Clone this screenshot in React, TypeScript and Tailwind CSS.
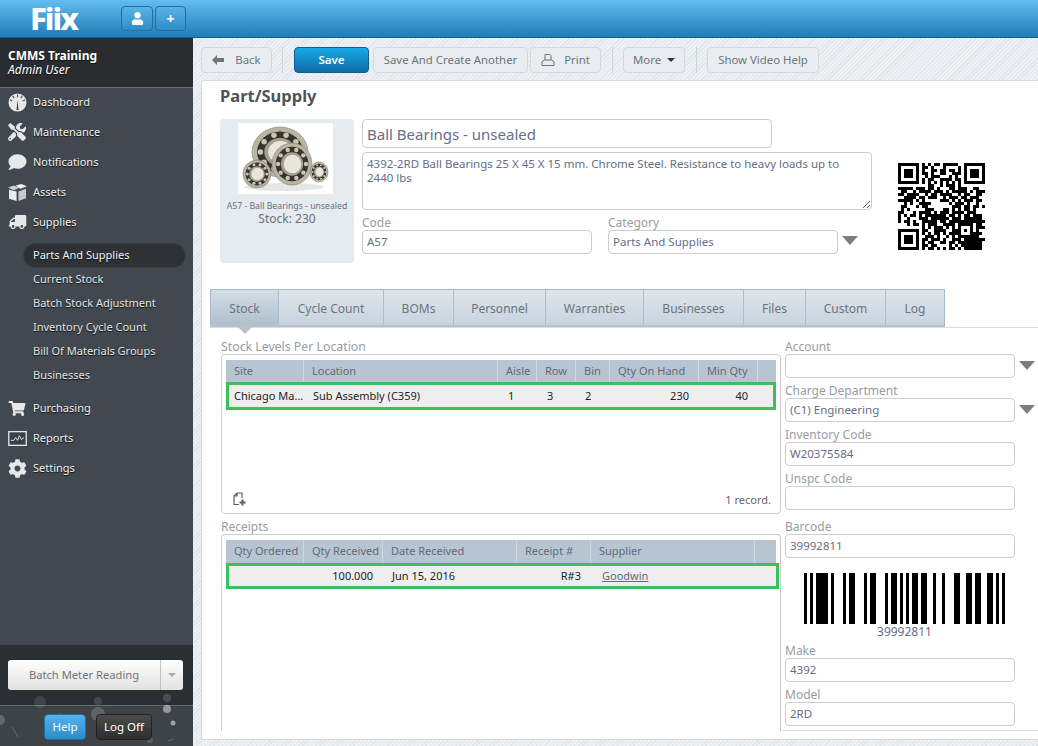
import React from "react";
import { FaTools, FaComment, FaTruck, FaShoppingCart, FaCog, FaUser } from "react-icons/fa";

const font = "font-['DejaVu_Sans_Condensed','DejaVu_Sans',sans-serif]";

const QR_ROWS = [
  "#######.#.#.##.#####..#######",
  "#.....#.##.#...#....#.#.....#",
  "#.###.#.#..##.##.##.#.#.###.#",
  "#.###.#.##.#..##..###.#.###.#",
  "#.###.#..#.###...#.#..#.###.#",
  "#.....#.#.##..####.##.#.....#",
  "#######.#.#.#.#.#.#.#.#######",
  "..........##..#.###.#........",
  "#####.###.##.#...##.###..##..",
  ".##..#.####.###.#.#####.#.###",
  "##.####..#.##.####..#.##..##.",
  "..####.##.###..#.###.##.###..",
  "#####.#.#.....###.#.#.###.##.",
  "..#.#..####......#.###.#..#..",
  ".##...#.##........###.##.##.#",
  ".#.#.....###...##.#.#.##.#...",
  "##...#.####.#.###.####.###...",
  "#.#.##.#.#######.##.#.##.###.",
  "#..#...###.######.###.######.",
  "#.##.#..#####.##.#############",
  "...#.##.#.###..####.#####.##.",
  "........#.#.###.#.#.#...#.###",
  "#######.##..####..###.#.#.#..",
  "#.....#.#.#.##.#.####...####.",
  "#.###.#..###.#..#.#.#######..",
  "#.###.#.##.###.#..###.#######",
  "#.###.#.#.##..##.##.########.",
  "#.....#.##.##....#.#.#######.",
  "#######.#.##.#.#.##.#.######.",
];

const BARS: [number, number][] = [
  [0, 3], [6, 3], [12, 12], [27, 3], [39, 3], [45, 6], [60, 3], [66, 6], [81, 3], [87, 6], [96, 3],
  [102, 3], [108, 6], [117, 6], [129, 3], [138, 3], [150, 6], [162, 6], [171, 6], [183, 6], [192, 3], [198, 3],
];

const GaugeIcon = () => (
  <svg viewBox="0 0 20 20" className="h-[19px] w-[19px]">
    <circle cx="10" cy="10" r="9.5" fill="#e8e8e8" />
    <path d="M10 7 L9 18 L11 18 Z" fill="#33383d" />
    <path d="M10 1.5 V4.5 M5 3 L6.5 5.5 M15 3 L13.5 5.5 M2 7 L4.5 8.5 M18 7 L15.5 8.5" stroke="#4a5056" strokeWidth="1.2" />
  </svg>
);

const ReportIcon = () => (
  <svg viewBox="0 0 20 16" className="h-[15px] w-[19px]">
    <rect x="0.7" y="0.7" width="18.6" height="14.6" fill="#3a4047" stroke="#e6e6e6" strokeWidth="1.4" />
    <path d="M3 10 L6 10 L8 7 L10 10 L12 5 L14 9 L17 7" fill="none" stroke="#e6e6e6" strokeWidth="1" />
  </svg>
);

const BoxIcon = () => (
  <svg viewBox="0 0 20 18" className="h-[17px] w-[19px]">
    <path d="M0 4 L6 1.5 L12 4 L6 6.5 Z" fill="#cfcfcf" />
    <path d="M8 1.5 L14 0 L20 2.5 L13 5 Z" fill="#f0f0f0" />
    <path d="M1 6 L9 8 V18 L1 15.5 Z" fill="#ededed" />
    <path d="M11 8 L19 5 V15 L11 18 Z" fill="#c9c9c9" />
  </svg>
);

const navTop = [
  { label: "Dashboard", y: 102, icon: <GaugeIcon /> },
  { label: "Maintenance", y: 132, icon: <FaTools className="h-[18px] w-[18px]" /> },
  { label: "Notifications", y: 162, icon: <FaComment className="h-[18px] w-[19px]" /> },
  { label: "Assets", y: 192, icon: <BoxIcon /> },
  { label: "Supplies", y: 222, icon: <FaTruck className="h-[14px] w-[19px] -scale-x-100" /> },
  { label: "Purchasing", y: 408, icon: <FaShoppingCart className="h-[15px] w-[18px]" /> },
  { label: "Reports", y: 438, icon: <ReportIcon /> },
  { label: "Settings", y: 468, icon: <FaCog className="h-[19px] w-[19px]" /> },
];

const subNav = ["Current Stock", "Batch Stock Adjustment", "Inventory Cycle Count", "Bill Of Materials Groups", "Businesses"];

const tabs = [
  { label: "Stock", w: 68 },
  { label: "Cycle Count", w: 105 },
  { label: "BOMs", w: 70 },
  { label: "Personnel", w: 92 },
  { label: "Warranties", w: 98 },
  { label: "Businesses", w: 100 },
  { label: "Files", w: 62 },
  { label: "Custom", w: 80 },
  { label: "Log", w: 58 },
];

const Field = ({ label, value, x, y, w = 230 }: { label: string; value: string; x: number; y: number; w?: number }) => (
  <div className="absolute flex flex-col" style={{ left: x, top: y, width: w }}>
    <label className="h-[16px] text-[12px] leading-[18px] text-[#979da3]">{label}</label>
    <input
      readOnly
      value={value}
      className="h-[24px] w-full rounded-[4px] border border-[#cbcdcf] bg-white px-[4px] pb-[1px] text-[11.5px] text-[#666e85] outline-none"
    />
  </div>
);

const Arrow = ({ x, y }: { x: number; y: number }) => (
  <div
    className="absolute h-0 w-0 border-x-[8px] border-t-[9px] border-x-transparent border-t-[#7c7f82]"
    style={{ left: x, top: y }}
  />
);

const ToolButton = ({ children, x, w }: { children: React.ReactNode; x: number; w: number }) => (
  <button
    className="absolute top-[47px] flex h-[26px] items-center justify-center rounded-[4px] border border-[#d3d8dd] bg-[#e9edf1] text-[11.4px] text-[#6d747c]"
    style={{ left: x, width: w }}
  >
    {children}
  </button>
);

const Sep = ({ x }: { x: number }) => <div className="absolute top-[47px] h-[26px] w-px bg-[#cfd4d9]" style={{ left: x }} />;

const stockCols = "grid-cols-[78px_194px_39px_39px_34px_89px_59px_18px]";
const receiptCols = "grid-cols-[78px_79px_134px_74px_164px_21px]";

const HeadCell = ({ children }: { children?: React.ReactNode }) => (
  <div className="flex items-center overflow-hidden whitespace-nowrap border-r border-[#cfd7df] pl-[8px] text-[#5f6b78] last:border-r-0">{children}</div>
);

const Ring = ({ cx, cy, rx, ry }: { cx: number; cy: number; rx: number; ry: number }) => {
  const balls = Array.from({ length: 10 }, (_, i) => (i / 10) * Math.PI * 2);
  return (
    <g>
      <ellipse cx={cx} cy={cy} rx={rx} ry={ry} fill="#b9b5a3" stroke="#77736a" strokeWidth="0.5" />
      <ellipse cx={cx} cy={cy} rx={rx * 0.82} ry={ry * 0.82} fill="#38342d" />
      {balls.map((a) => (
        <circle key={a} cx={cx + Math.cos(a) * rx * 0.7} cy={cy + Math.sin(a) * ry * 0.7} r={Math.min(rx, ry) * 0.11} fill="#c9c6b8" />
      ))}
      <ellipse cx={cx} cy={cy} rx={rx * 0.56} ry={ry * 0.56} fill="#a5a08e" />
      <ellipse cx={cx + 0.5} cy={cy} rx={rx * 0.44} ry={ry * 0.44} fill="#e9e7dc" />
    </g>
  );
};

const Bearing = () => (
  <svg viewBox="0 0 95 71" className="absolute left-[238px] top-[123px] h-[71px] w-[95px] bg-white">
    <ellipse cx="46" cy="64" rx="40" ry="4" fill="#e6e6e6" />
    <Ring cx={42} cy={29} rx={28} ry={25} />
    <Ring cx={54} cy={41} rx={20} ry={21} />
    <Ring cx={19} cy={51} rx={14} ry={14} />
    <Ring cx={81} cy={49} rx={9} ry={10} />
  </svg>
);

const Bubbles = () => (
  <svg viewBox="0 0 193 101" className="absolute left-0 top-[645px] h-[101px] w-[193px]">
    <circle cx="40" cy="57" r="6" fill="#fff" opacity="0.1" />
    <circle cx="98" cy="56" r="4" fill="#fff" opacity="0.12" />
    <circle cx="167" cy="53" r="4" fill="#fff" opacity="0.15" />
    <circle cx="0" cy="75" r="5" fill="#fff" opacity="0.2" />
    <circle cx="98" cy="69" r="7" fill="#fff" opacity="0.18" />
    <circle cx="167" cy="64" r="4" fill="#fff" opacity="0.45" />
    <circle cx="173" cy="78" r="2.5" fill="#fff" opacity="0.5" />
    <circle cx="150" cy="95" r="3" fill="#fff" opacity="0.15" />
    <path d="M12 82 L18 92 M60 68 L64 74 M168 96 L174 94" stroke="#fff" strokeWidth="1" opacity="0.2" />
  </svg>
);

export default function App() {
  return (
    <div
      className={`relative h-[746px] w-[1038px] overflow-hidden bg-[repeating-linear-gradient(135deg,#dfe5ea_0,#dfe5ea_1px,#eef1f4_1px,#eef1f4_3px)] ${font}`}
    >
      {/* Top bar */}
      <header className="absolute inset-x-0 top-0 z-10 h-[38px] border-b border-[#1c5d85] bg-gradient-to-b from-[#63bdf0] to-[#1f7db6]">
        <div className="absolute left-[30px] top-[-1px] flex h-[38px] items-center font-['Open_Sans',sans-serif] text-[31px] font-extrabold tracking-[-2px] text-white">
          Fiix
        </div>
        <button className="absolute left-[121px] top-[6px] flex h-[25px] w-[32px] items-center justify-center rounded-[4px] border border-[#1f6fa5] bg-gradient-to-b from-[#5ab2e6] to-[#2f8cc9] text-white">
          <FaUser className="h-[13px] w-[13px]" />
        </button>
        <button className="absolute left-[155px] top-[6px] flex h-[25px] w-[31px] items-center justify-center rounded-[4px] border border-[#1f6fa5] bg-gradient-to-b from-[#5ab2e6] to-[#2f8cc9] text-[14px] font-bold text-white">
          +
        </button>
      </header>

      {/* Sidebar */}
      <aside className="absolute bottom-0 left-0 top-[38px] w-[193px] bg-[#41484f] text-[12px] text-[#f0f0f0] [text-shadow:0_1px_1px_#111]">
        <div className="h-[50px] border-b border-[#6a6f74] bg-[#2a2c2f] pl-[8px] pt-[11px] leading-[14px] text-white">
          <div className="font-bold">CMMS Training</div>
          <div className="italic">Admin User</div>
        </div>
        <div className="absolute left-[23px] top-[205px] h-[25px] w-[163px] rounded-full border border-[#3a3f44] bg-[#2e3236]" />
      </aside>
      <nav className="absolute left-0 top-0 text-[11px] text-[#f0f0f0] [text-shadow:0_1px_1px_#111]">
        {navTop.map((item) => (
          <div key={item.label} className="absolute flex h-[20px] items-center whitespace-nowrap" style={{ top: item.y - 10, left: 8 }}>
            <span className="flex w-[25px] items-center text-[#e8e8e8]">{item.icon}</span>
            {item.label}
          </div>
        ))}
        <div className="absolute left-[33px] top-[245px] flex h-[20px] items-center whitespace-nowrap">Parts And Supplies</div>
        {subNav.map((label, i) => (
          <div key={label} className="absolute left-[33px] flex h-[20px] items-center whitespace-nowrap text-[#e4e4e4]" style={{ top: 269 + i * 24 }}>
            {label}
          </div>
        ))}
      </nav>

      {/* Sidebar bottom */}
      <div className="absolute left-0 top-[645px] h-[60px] w-[193px] bg-[#2b2f33]" />
      <div className="absolute left-0 top-[705px] h-[41px] w-[193px] border-t border-[#666b70] bg-[#3e4347]" />
      <Bubbles />
      <div className="absolute left-[8px] top-[660px] flex h-[30px] w-[175px] items-center rounded-[3px] bg-gradient-to-b from-white to-[#e2e2e2] text-[11.2px] text-[#6f7479]">
        <span className="flex-1 text-center">Batch Meter Reading</span>
        <span className="flex h-full w-[23px] items-center justify-center border-l border-[#c2c2c2]">
          <span className="h-0 w-0 border-x-[4px] border-t-[4px] border-x-transparent border-t-[#aaaaaa]" />
        </span>
      </div>
      <button className="absolute left-[44px] top-[714px] h-[26px] w-[42px] rounded-[4px] border border-[#1d6fa8] bg-gradient-to-b from-[#53b2ec] to-[#2b8ccb] text-[11.5px] text-white">
        Help
      </button>
      <button className="absolute left-[96px] top-[714px] h-[26px] w-[56px] rounded-[4px] border border-[#222] bg-gradient-to-b from-[#4c4c4c] to-[#2e2e2e] text-[11.5px] text-white">
        Log Off
      </button>

      {/* Toolbar */}
      <ToolButton x={201} w={71}>
        <svg viewBox="0 0 12 10" className="mr-[11px] h-[10px] w-[12px]">
          <path d="M0 5 L5 0 L5 3 L12 3 L12 7 L5 7 L5 10 Z" fill="#6d747c" />
        </svg>
        Back
      </ToolButton>
      <Sep x={282} />
      <button className="absolute left-[294px] top-[47px] h-[26px] w-[75px] rounded-[4px] border border-[#0f5f93] bg-gradient-to-b from-[#18a9e6] to-[#0f6da8] text-[11.5px] font-semibold text-white">
        Save
      </button>
      <ToolButton x={373} w={155}>Save And Create Another</ToolButton>
      <ToolButton x={530} w={71}>
        <svg viewBox="0 0 14 14" className="mr-[9px] h-[14px] w-[14px]" fill="none" stroke="#6d747c" strokeWidth="1">
          <path d="M4 7 V1.5 H9 L10 2.5 V7 M1 12.5 V9 L3 7 H11 L13 9 V12.5 Z" />
        </svg>
        Print
      </ToolButton>
      <Sep x={612} />
      <ToolButton x={623} w={62}>
        More
        <span className="ml-[6px] h-0 w-0 border-x-[4px] border-t-[4px] border-x-transparent border-t-[#33383d]" />
      </ToolButton>
      <Sep x={696} />
      <ToolButton x={707} w={112}>Show Video Help</ToolButton>

      {/* Main panel */}
      <main className="absolute left-[201px] top-[80px] h-[660px] w-[837px] rounded-tl-[4px] border border-r-0 border-[#d5dade] bg-white" />
      <h1 className="absolute left-[220px] top-[86px] text-[16.5px] font-bold leading-[20px] text-[#4d5359]">Part/Supply</h1>

      <div className="absolute left-[220px] top-[119px] h-[144px] w-[134px] rounded-[4px] bg-[#e6ebf0] pt-[80px] text-center text-[#69717c]">
        <div className="mt-[1px] text-[8.7px] leading-[12px]">A57 - Ball Bearings - unsealed</div>
        <div className="text-[12px] leading-[14px]">Stock: 230</div>
      </div>
      <Bearing />

      <input
        readOnly
        value="Ball Bearings - unsealed"
        className="absolute left-[362px] top-[119px] h-[29px] w-[410px] rounded-[4px] border border-[#cbcdcf] bg-white px-[4px] text-[15px] text-[#666e85] outline-none"
      />
      <textarea
        readOnly
        defaultValue={"4392-2RD Ball Bearings 25 X 45 X 15 mm. Chrome Steel. Resistance to heavy loads up to\n2440 lbs"}
        className="absolute left-[362px] top-[152px] h-[58px] w-[510px] rounded-[4px] border border-[#cbcdcf] bg-white px-[4px] py-[4px] text-[11.5px] leading-[14px] text-[#666e85] outline-none"
      />
      <Field label="Code" value="A57" x={362} y={214} />
      <Field label="Category" value="Parts And Supplies" x={608} y={214} />
      <Arrow x={842} y={236} />

      <svg viewBox="0 0 29 29" shapeRendering="crispEdges" className="absolute left-[898px] top-[163px] h-[87px] w-[87px]">
        {QR_ROWS.map((row, y) =>
          row.split("").map((c, x) => (c === "#" ? <rect key={`${x}-${y}`} x={x} y={y} width="1" height="1" fill="#000" /> : null))
        )}
      </svg>

      {/* Tabs */}
      <div className="absolute left-[210px] top-[327px] h-px w-[828px] bg-[#d9dde1]" />
      <div className="absolute left-[210px] top-[289px] flex h-[38px] border border-b-2 border-[#a9b9c7] border-b-[#b5c2ce] bg-gradient-to-b from-[#dfe6ec] to-[#c7d3de]">
        {tabs.map((t, i) => (
          <div
            key={t.label}
            className={`flex items-center justify-center border-r border-[#aebdca] pt-[2px] text-[12px] text-[#6b747d] last:border-r-0 ${i === 0 ? "bg-gradient-to-b from-[#d4dee6] to-[#aebfcd]" : ""}`}
            style={{ width: t.w }}
          >
            {t.label}
          </div>
        ))}
      </div>
      <div className="absolute left-[238px] top-[327px] h-0 w-0 border-x-[7px] border-t-[7px] border-x-transparent border-t-[#b5c2ce]" />

      {/* Stock levels */}
      <div className="absolute left-[221px] top-[340px] text-[12.3px] leading-[14px] text-[#979da3]">Stock Levels Per Location</div>
      <section className="absolute left-[221px] top-[354px] h-[160px] w-[560px] rounded-[4px] border border-[#cbcdcf] text-[11px]">
        <div className={`absolute left-[4px] top-[5px] grid h-[23px] w-[550px] bg-[#b7c5d2] ${stockCols}`}>
          {["Site", "Location", "Aisle", "Row", "Bin", "Qty On Hand", "Min Qty", ""].map((h, i) => (
            <HeadCell key={i}>{h}</HeadCell>
          ))}
        </div>
        <div className={`absolute left-[4px] top-[27px] grid h-[28px] w-[550px] bg-[#eeeeee] text-[#1e2226] ${stockCols}`}>
          <div className="flex items-center whitespace-nowrap pl-[8px]">Chicago Ma...</div>
          <div className="flex items-center whitespace-nowrap pl-[9px]">Sub Assembly (C359)</div>
          <div className="flex items-center pl-[10px]">1</div>
          <div className="flex items-center pl-[10px]">3</div>
          <div className="flex items-center pl-[9px]">2</div>
          <div className="flex items-center justify-end pr-[10px]">230</div>
          <div className="flex items-center justify-end pr-[10px]">40</div>
          <div />
          <div className="absolute inset-0 border-[3px] border-[#3dc05c]" />
        </div>
        <svg viewBox="0 0 14 14" className="absolute left-[10px] top-[137px] h-[14px] w-[14px]" fill="none" stroke="#5c6268" strokeWidth="1.2">
          <path d="M7 12.5 H2 V4 L5 1 H10 V6 M2 4 H5 V1" />
          <path d="M10.5 7.5 V13.5 M7.5 10.5 H13.5" strokeWidth="2" />
        </svg>
        <div className="absolute right-[9px] top-[137px] text-[#5f666d]">1 record.</div>
      </section>

      {/* Receipts */}
      <div className="absolute left-[221px] top-[520px] text-[12px] leading-[14px] text-[#979da3]">Receipts</div>
      <section className="absolute left-[221px] top-[534px] h-[197px] w-[560px] rounded-t-[4px] border border-b-0 border-[#cbcdcf] text-[11px]">
        <div className={`absolute left-[4px] top-[5px] grid h-[23px] w-[550px] bg-[#b7c5d2] ${receiptCols}`}>
          {["Qty Ordered", "Qty Received", "Date Received", "Receipt #", "Supplier", ""].map((h, i) => (
            <HeadCell key={i}>{h}</HeadCell>
          ))}
        </div>
        <div className={`absolute left-[4px] top-[28px] grid h-[26px] w-[553px] bg-[#eeeeee] text-[#1e2226] ${receiptCols}`}>
          <div />
          <div className="flex items-center justify-end pr-[10px]">100.000</div>
          <div className="flex items-center pl-[9px]">Jun 15, 2016</div>
          <div className="flex items-center justify-end pr-[10px]">R#3</div>
          <div className="flex items-center pl-[11px] text-[#5f6b78] underline">Goodwin</div>
          <div />
          <div className="absolute inset-0 border-[3px] border-[#3dc05c]" />
        </div>
      </section>

      {/* Right column */}
      <Field label="Account" value="" x={785} y={338} />
      <Arrow x={1019} y={361} />
      <Field label="Charge Department" value="(C1) Engineering" x={785} y={382} />
      <Arrow x={1019} y={405} />
      <Field label="Inventory Code" value="W20375584" x={785} y={426} />
      <Field label="Unspc Code" value="" x={785} y={470} />
      <Field label="Barcode" value="39992811" x={785} y={518} />
      <svg viewBox="0 0 201 51" shapeRendering="crispEdges" className="absolute left-[804px] top-[573px] h-[51px] w-[201px]">
        {BARS.map(([x, w]) => (
          <rect key={x} x={x} y="0" width={w} height="51" fill="#000" />
        ))}
      </svg>
      <div className="absolute left-[804px] top-[625px] w-[201px] text-center text-[12px] leading-[14px] text-[#666e85]">39992811</div>
      <Field label="Make" value="4392" x={785} y={642} />
      <Field label="Model" value="2RD" x={785} y={686} />
      <div className="absolute left-[781px] top-[730px] h-px w-[257px] bg-[#d9dde1]" />
    </div>
  );
}
